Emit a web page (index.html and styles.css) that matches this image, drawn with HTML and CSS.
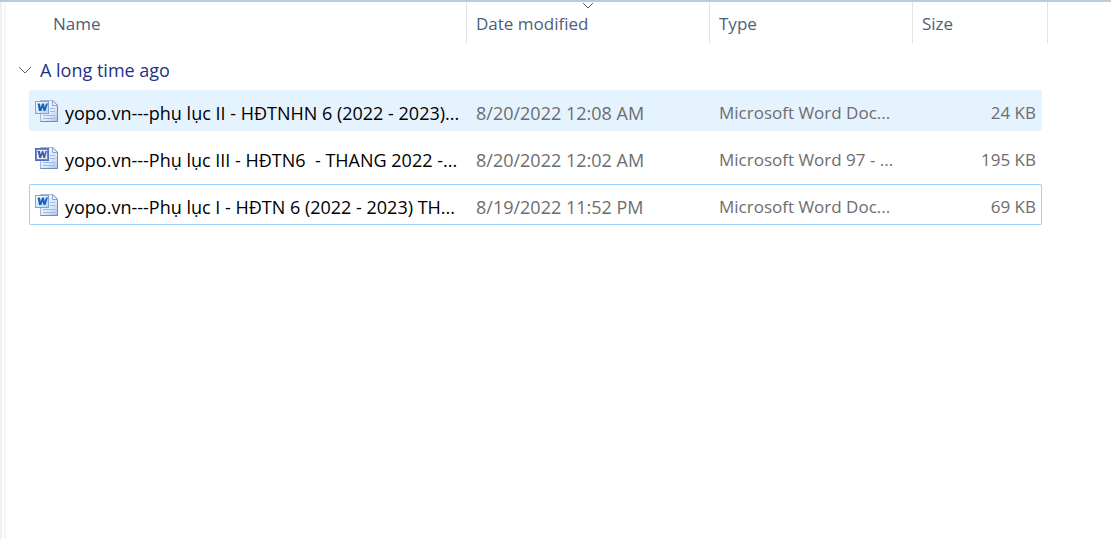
FILE: index.html
```html
<!DOCTYPE html>
<html lang="en">
<head>
<meta charset="utf-8">
<title>Files</title>
<link rel="stylesheet" href="styles.css">
</head>
<body>
<svg class="defs" aria-hidden="true">
  <defs>
    <linearGradient id="page" x1="0" y1="0" x2="1" y2="1"><stop offset="0" stop-color="#fafcff"/><stop offset="0.600" stop-color="#dfe9f8"/><stop offset="1" stop-color="#a9c1e8"/></linearGradient>
    <linearGradient id="tile" x1="0" y1="0" x2="1" y2="1"><stop offset="0" stop-color="#ffffff"/><stop offset="1" stop-color="#b5d3f6"/></linearGradient>
    <g id="sheet">
      <path d="M5.500 1.500H18L22.500 6v16.500H5.500z" fill="url(#page)" stroke="#a5b8da"/>
      <path d="M22.500 6v16.500H5.500" fill="none" stroke="#6f8cc2"/>
      <path d="M17.500 1.500v5h5z" fill="#e6effb" stroke="#8ea4ca"/>
      <path d="M15 9.500h5M15 12.500h5M8 16.500h12M8 19.500h12" stroke="#a3b9e0"/>
    </g>
    <symbol id="docx" viewBox="0 0 24 24">
      <use href="#sheet"/>
      <rect x="0.500" y="2.500" width="13" height="12" fill="url(#tile)" stroke="#7ba3dc"/>
      <path d="M2.500 4.500h2.500l.7 4L7 4.500h2l.8 4 1.200-4h2L10.500 12H8.500L7.800 8.500 6.300 12H4z" fill="#1b62bd"/>
    </symbol>
    <symbol id="doc" viewBox="0 0 24 24">
      <use href="#sheet"/>
      <rect x="0.500" y="2.500" width="13" height="12" fill="#6485cf" stroke="#5071bd"/>
      <rect x="2" y="4" width="10" height="9" fill="#e7effc"/>
      <path d="M2.500 5h2.500l.7 3.500L7 5h1.500l.8 3.500L10.500 5h1.500L10 12H8.300L7.700 8.500 6 12H4.300z" fill="#3d5cae"/>
    </symbol>
  </defs>
</svg>
<main class="pane">
  <table class="files">
    <thead>
      <tr class="head">
        <th class="head-name" scope="col">Name</th>
        <th class="sorted" scope="col" aria-sort="descending">Date modified
          <svg class="sort" viewBox="0 0 12 7" aria-hidden="true"><path d="M1 1l5 5 5-5"/></svg>
        </th>
        <th scope="col">Type</th>
        <th scope="col">Size</th>
      </tr>
    </thead>
    <tbody>
      <tr class="group">
        <th scope="rowgroup"><button class="toggle" type="button" aria-expanded="true"><svg class="chevron" viewBox="0 0 14 8" aria-hidden="true"><path d="M1 1l6 6 6-6"/></svg>A long time ago</button></th>
      </tr>
      <tr class="row hovered">
        <td class="name"><svg class="icon" aria-hidden="true"><use href="#docx"/></svg><span class="label">yopo.vn---phụ lục II - HĐTNHN 6 (2022 - 2023)...</span></td>
        <td class="date">8/20/2022 12:08 AM</td>
        <td>Microsoft Word Doc...</td>
        <td class="size">24 KB</td>
      </tr>
      <tr class="row">
        <td class="name"><svg class="icon" aria-hidden="true"><use href="#doc"/></svg><span class="label">yopo.vn---Phụ lục III - HĐTN6&nbsp; - THANG 2022 -...</span></td>
        <td class="date">8/20/2022 12:02 AM</td>
        <td>Microsoft Word 97 - ...</td>
        <td class="size">195 KB</td>
      </tr>
      <tr class="row focused">
        <td class="name"><svg class="icon" aria-hidden="true"><use href="#docx"/></svg><span class="label">yopo.vn---Phụ lục I - HĐTN 6 (2022 - 2023) TH...</span></td>
        <td class="date">8/19/2022 11:52 PM</td>
        <td>Microsoft Word Doc...</td>
        <td class="size">69 KB</td>
      </tr>
    </tbody>
  </table>
</main>
</body>
</html>
```
FILE: styles.css
```css
* { box-sizing: border-box; }

body {
  margin: 0;
  background: #fff;
  color: #6d6d6d;
  font: 17px/24px "Open Sans", "Noto Sans", sans-serif;
}

.defs { position: absolute; width: 0; height: 0; }

.pane {
  min-height: 100vh;
  border-top: 2px solid #bccbd8;
  background: linear-gradient(to right, #f0f0f0 2px, #fff 2px 4px, #f7f7f7 4px 6px, #fff 6px);
}

.files, thead, tbody { display: block; }
.files { padding: 0 63px 0 29px; }

.head, .row {
  display: grid;
  grid-template-columns: minmax(0, 1fr) 243px 203px 135px;
}

th, td { padding: 0; font-weight: 400; text-align: left; white-space: nowrap; }

.head th {
  height: 41px;
  padding: 10px 9px 0;
  border-right: 1px solid #e2e2e2;
  color: #4c607a;
}
.head .head-name { padding-left: 24px; }
.head .sorted { position: relative; }

.sort {
  position: absolute;
  top: 0;
  left: 50%;
  width: 12px;
  height: 7px;
  margin-left: -6px;
}
.sort path, .chevron path { fill: none; stroke: #606060; }

.group, .group th { display: block; }
.toggle {
  display: flex;
  align-items: center;
  gap: 8px;
  height: 47px;
  margin-left: -11px;
  padding: 6px 0 0;
  border: 0;
  background: none;
  color: #1e3287;
  font: inherit;
  font-size: 18px;
}
.chevron { width: 14px; height: 8px; }

.row {
  align-items: center;
  height: 41px;
  margin: 0 6px 6px 0;
  border-radius: 2px;
  grid-template-columns: minmax(0, 1fr) 243px 203px 129px;
}
.row td { padding: 4px 6px 0 9px; }
.row .name { display: flex; align-items: center; gap: 6px; padding: 0 0 0 6px; color: #000; }
.row .label { padding-top: 4px; }
.row .name, .row .date { font-size: 18px; }
.row .size { text-align: right; }
.icon { flex: none; width: 24px; height: 24px; }

.hovered { background: #e5f3ff; }
.focused { box-shadow: inset 0 0 0 1px #99d1ff; }
```
